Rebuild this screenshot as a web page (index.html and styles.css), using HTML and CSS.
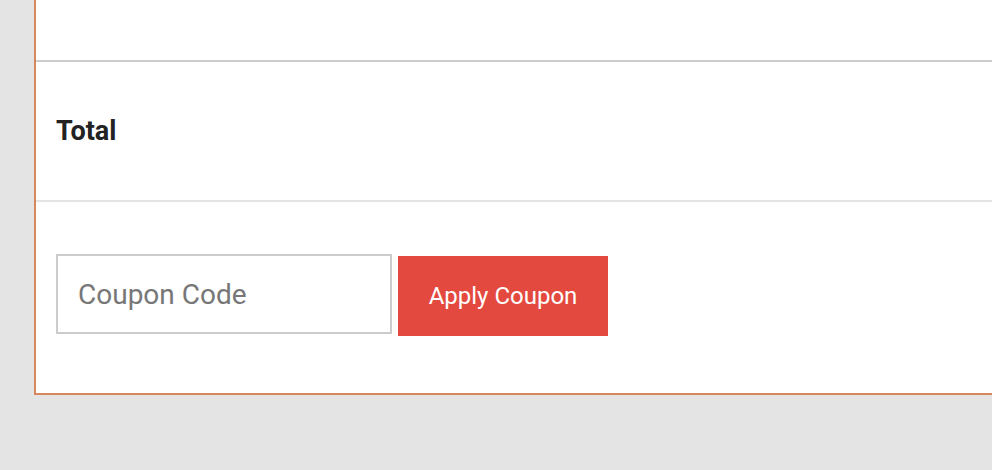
FILE: index.html
```html
<!DOCTYPE html>
<html lang="en">
<head>
    <meta charset="UTF-8">
    <meta name="viewport" content="width=device-width, initial-scale=1.0">
    <title>Cart Totals</title>
    <link rel="stylesheet" href="styles.css">
</head>
<body>
    <div class="page">
        <div class="cart-totals">
            <div class="row row-top"></div>
            <div class="row row-total">
                <span class="label">Total</span>
            </div>
            <div class="row row-coupon">
                <form class="coupon-form">
                    <input type="text" class="coupon-input" placeholder="Coupon Code">
                    <button type="submit" class="coupon-btn">Apply Coupon</button>
                </form>
            </div>
        </div>
    </div>
</body>
</html>
```

FILE: styles.css
```css
body {
    margin: 0;
    background: #e4e4e4;
    font-family: Roboto, "Liberation Sans", sans-serif;
    height: 470px;
    overflow: hidden;
}

.page {
    padding-left: 34px;
    margin-top: -60px;
}

.cart-totals {
    background: #fff;
    border-left: 2px solid #d5885d;
    border-bottom: 2px solid #d5885d;
    width: 1200px;
}

.row {
    padding: 0 20px;
    display: flex;
    align-items: center;
}

.row-top {
    height: 120px;
    border-bottom: 2px solid #cccccc;
}

.row-total {
    height: 138px;
    border-bottom: 2px solid #e4e4e4;
}

.label {
    font-size: 27px;
    font-weight: bold;
    color: #222;
}

.row-coupon {
    padding-top: 52px;
    padding-bottom: 57px;
    align-items: flex-start;
}

.coupon-form {
    display: flex;
    align-items: flex-start;
    gap: 6px;
}

.coupon-input {
    box-sizing: border-box;
    width: 336px;
    height: 80px;
    border: 2px solid #cccccc;
    padding: 0 20px;
    font-family: Roboto, "Liberation Sans", sans-serif;
    font-size: 28px;
    color: #333;
    outline: none;
}

.coupon-input::placeholder {
    color: #777;
}

.coupon-btn {
    margin-top: 2px;
    width: 210px;
    height: 80px;
    border: none;
    background: #e3493e;
    color: #fff;
    font-family: Roboto, "Liberation Sans", sans-serif;
    font-size: 24px;
    padding: 0;
}
```
